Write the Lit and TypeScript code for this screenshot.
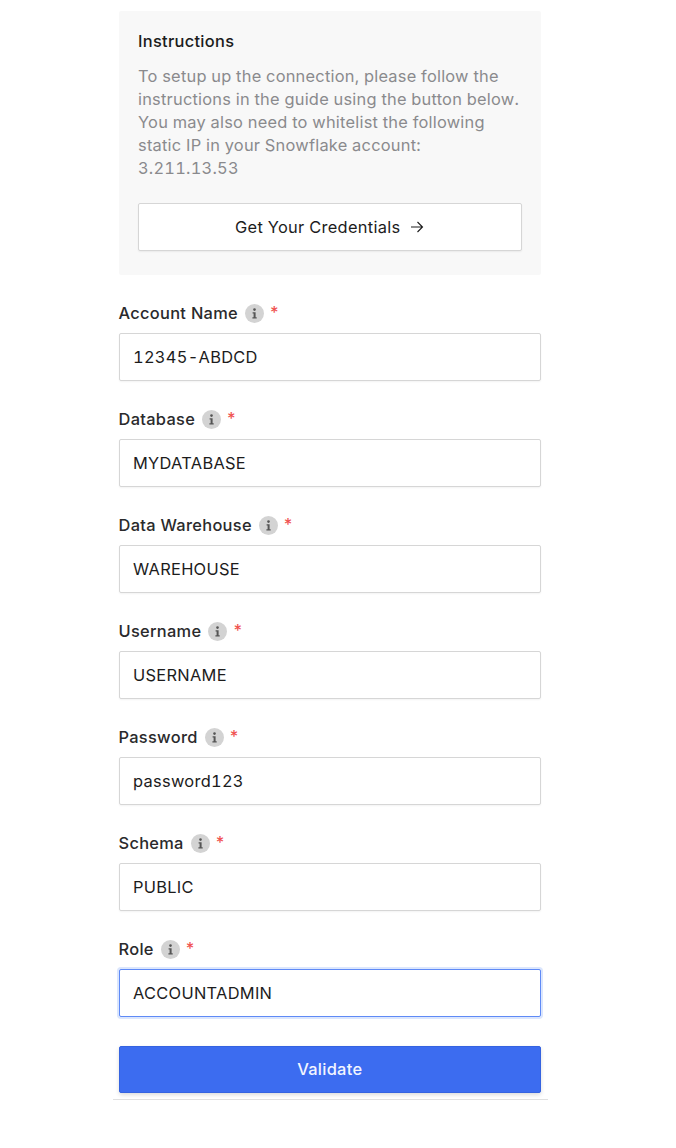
import { LitElement, html, css, svg } from "lit";
import { customElement } from "lit/decorators.js";

const FIELDS: { label: string; value: string; focus?: boolean }[] = [
  { label: "Account Name", value: "12345-ABDCD" },
  { label: "Database", value: "MYDATABASE" },
  { label: "Data Warehouse", value: "WAREHOUSE" },
  { label: "Username", value: "USERNAME" },
  { label: "Password", value: "password123" },
  { label: "Schema", value: "PUBLIC" },
  { label: "Role", value: "ACCOUNTADMIN", focus: true },
];

const infoIcon = svg`<circle cx="9.5" cy="9.5" r="9.5" fill="#d3d3d3"/>
  <circle cx="9.5" cy="5.6" r="1.3" fill="#555"/>
  <path d="M7.6 8.2h3v5h1.1v1.2H7.4v-1.2h1.2V9.4h-1z" fill="#555"/>`;

@customElement("app-root")
export class AppRoot extends LitElement {
  static styles = css`
    :host {
      display: block;
      height: 1148px;
      background: #fff;
      font-family: Inter, "Liberation Sans", sans-serif;
      font-feature-settings: "tnum";
      letter-spacing: 0.3px;
      color: #1a1a1a;
      box-sizing: border-box;
      padding: 11px 0 0 113px;
    }
    .wrap {
      width: 435px;
      display: flex;
      flex-direction: column;
    }
    .inner {
      width: 422.5px;
      margin-left: 5.5px;
      display: flex;
      flex-direction: column;
    }
    .panel {
      box-sizing: border-box;
      height: 264px;
      background: #f8f8f8;
      border-radius: 2px;
      padding: 19px 19.5px 0;
      display: flex;
      flex-direction: column;
    }
    .title {
      font-size: 16.4px;
      line-height: 23px;
      font-weight: 500;
      color: #1c1c1c;
    }
    .desc {
      margin-top: 12px;
      font-size: 16.4px;
      line-height: 23px;
      letter-spacing: 0.23px;
      white-space: nowrap;
      color: #8a8a8d;
    }
    .cred {
      box-sizing: border-box;
      margin-top: 23px;
      height: 48px;
      background: #fff;
      border: 1px solid #d6d6d6;
      border-radius: 2px;
      box-shadow: 0 1px 2px rgba(0, 0, 0, 0.06);
      display: flex;
      align-items: center;
      justify-content: center;
      gap: 10px;
      font-size: 16.4px;
      color: #1c1c1c;
    }
    .cred svg {
      width: 14px;
      height: 14px;
    }
    .form {
      margin-top: 28px;
      display: flex;
      flex-direction: column;
      gap: 28.5px;
    }
    .field {
      display: flex;
      flex-direction: column;
      gap: 10px;
    }
    .label {
      height: 20px;
      display: flex;
      align-items: center;
      font-size: 16.4px;
      font-weight: 500;
      color: #2a2a2c;
    }
    .label svg {
      width: 19px;
      height: 19px;
      margin-left: 7px;
    }
    .req {
      margin-left: 5px;
      color: #f0524f;
      font-size: 16.4px;
      position: relative;
      top: -1px;
    }
    .input {
      box-sizing: border-box;
      height: 47.5px;
      background: #fff;
      border: 1px solid #d6d6d6;
      border-radius: 2px;
      box-shadow: 0 1px 2px rgba(0, 0, 0, 0.05);
      padding: 0 13.5px;
      display: flex;
      align-items: center;
      font-size: 16.4px;
      color: #1c1c1c;
    }
    .input.focus {
      border-color: #5f8af6;
      box-shadow: 0 0 0 2px #dbe6fd;
    }
    .validate {
      box-sizing: border-box;
      margin-top: 29px;
      height: 47.5px;
      background: #3c6cf0;
      border: 1px solid #3563e0;
      border-radius: 2px;
      box-shadow: 0 2px 4px rgba(0, 0, 0, 0.14);
      color: #f2f5ff;
      display: flex;
      align-items: center;
      justify-content: center;
      font-size: 16.4px;
      font-weight: 500;
    }
    .rule {
      margin-top: 6px;
      height: 1px;
      background: #e0e0e0;
    }
  `;

  render() {
    return html`
      <div class="wrap">
        <div class="inner">
          <div class="panel">
            <div class="title">Instructions</div>
            <div class="desc">
              To setup up the connection, please follow the<br />
              instructions in the guide using the button below.<br />
              You may also need to whitelist the following<br />
              static IP in your Snowflake account:<br />
              3.211.13.53
            </div>
            <div class="cred">
              <span>Get Your Credentials</span>
              <svg viewBox="0 0 14 14" fill="none" stroke="#1c1c1c" stroke-width="1.1">
                <path d="M1 7h11.5M7.5 2l5 5-5 5" />
              </svg>
            </div>
          </div>
          <div class="form">
            ${FIELDS.map(
              (f) => html`
                <div class="field">
                  <div class="label">
                    <span>${f.label}</span>
                    <svg viewBox="0 0 19 19">${infoIcon}</svg>
                    <span class="req">*</span>
                  </div>
                  <div class="input ${f.focus ? "focus" : ""}">${f.value}</div>
                </div>
              `
            )}
          </div>
          <div class="validate">Validate</div>
        </div>
        <div class="rule"></div>
      </div>
    `;
  }
}
